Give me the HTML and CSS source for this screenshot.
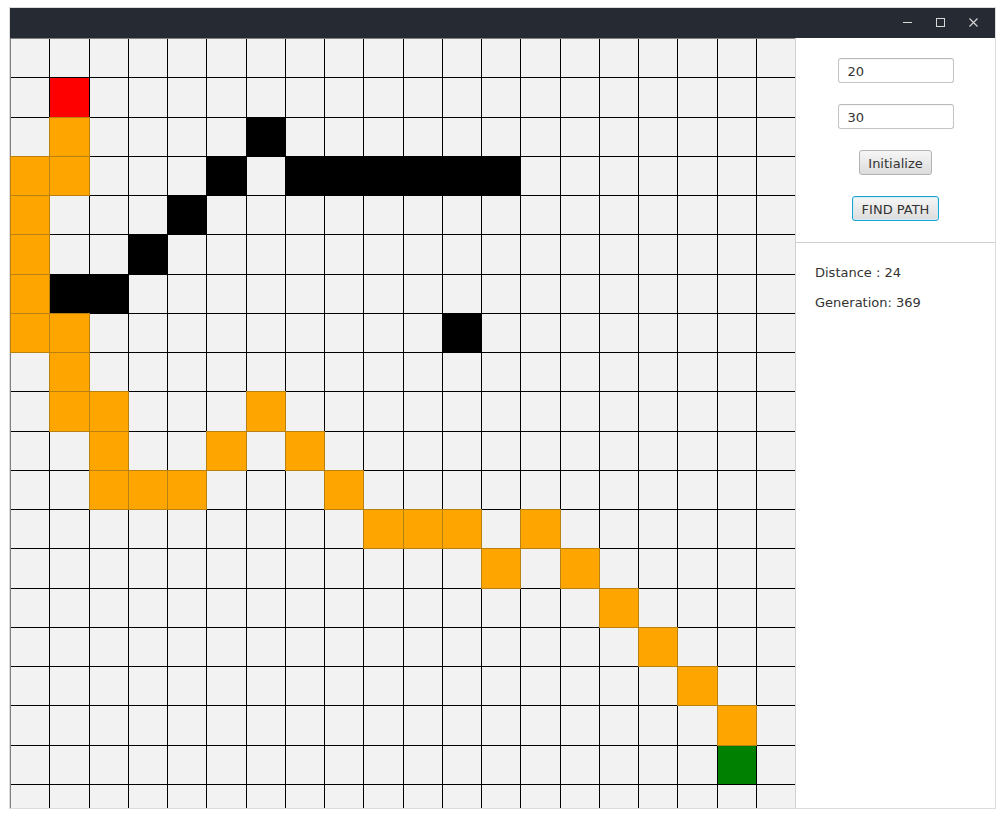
FILE: index.html
```html
<!DOCTYPE html>
<html>
<head>
<meta charset="utf-8">
<title>Path Finder</title>
<link rel="stylesheet" href="styles.css">
</head>
<body>
<div class="window">
  <div class="titlebar">
    <span class="wbtn"><svg width="9" height="9" viewBox="0 0 9 9"><path d="M0 4.5H9" stroke="#d8d8d8" stroke-width="1"/></svg></span>
    <span class="wbtn"><svg width="9" height="9" viewBox="0 0 9 9"><rect x="0.5" y="0.5" width="8" height="8" fill="none" stroke="#d8d8d8" stroke-width="1"/></svg></span>
    <span class="wbtn"><svg width="9" height="9" viewBox="0 0 9 9"><path d="M0.5 0.5L8.5 8.5M8.5 0.5L0.5 8.5" stroke="#d8d8d8" stroke-width="1.1"/></svg></span>
  </div>
  <div class="content">
    <div class="board">
      <div class="grid">
        <div></div><div></div><div></div><div></div><div></div><div></div><div></div><div></div><div></div><div></div><div></div><div></div><div></div><div></div><div></div><div></div><div></div><div></div><div></div><div></div>
        <div></div><div class="start"></div><div></div><div></div><div></div><div></div><div></div><div></div><div></div><div></div><div></div><div></div><div></div><div></div><div></div><div></div><div></div><div></div><div></div><div></div>
        <div></div><div class="path"></div><div></div><div></div><div></div><div></div><div class="wall"></div><div></div><div></div><div></div><div></div><div></div><div></div><div></div><div></div><div></div><div></div><div></div><div></div><div></div>
        <div class="path"></div><div class="path"></div><div></div><div></div><div></div><div class="wall"></div><div></div><div class="wall"></div><div class="wall"></div><div class="wall"></div><div class="wall"></div><div class="wall"></div><div class="wall"></div><div></div><div></div><div></div><div></div><div></div><div></div><div></div>
        <div class="path"></div><div></div><div></div><div></div><div class="wall"></div><div></div><div></div><div></div><div></div><div></div><div></div><div></div><div></div><div></div><div></div><div></div><div></div><div></div><div></div><div></div>
        <div class="path"></div><div></div><div></div><div class="wall"></div><div></div><div></div><div></div><div></div><div></div><div></div><div></div><div></div><div></div><div></div><div></div><div></div><div></div><div></div><div></div><div></div>
        <div class="path"></div><div class="wall"></div><div class="wall"></div><div></div><div></div><div></div><div></div><div></div><div></div><div></div><div></div><div></div><div></div><div></div><div></div><div></div><div></div><div></div><div></div><div></div>
        <div class="path"></div><div class="path"></div><div></div><div></div><div></div><div></div><div></div><div></div><div></div><div></div><div></div><div class="wall"></div><div></div><div></div><div></div><div></div><div></div><div></div><div></div><div></div>
        <div></div><div class="path"></div><div></div><div></div><div></div><div></div><div></div><div></div><div></div><div></div><div></div><div></div><div></div><div></div><div></div><div></div><div></div><div></div><div></div><div></div>
        <div></div><div class="path"></div><div class="path"></div><div></div><div></div><div></div><div class="path"></div><div></div><div></div><div></div><div></div><div></div><div></div><div></div><div></div><div></div><div></div><div></div><div></div><div></div>
        <div></div><div></div><div class="path"></div><div></div><div></div><div class="path"></div><div></div><div class="path"></div><div></div><div></div><div></div><div></div><div></div><div></div><div></div><div></div><div></div><div></div><div></div><div></div>
        <div></div><div></div><div class="path"></div><div class="path"></div><div class="path"></div><div></div><div></div><div></div><div class="path"></div><div></div><div></div><div></div><div></div><div></div><div></div><div></div><div></div><div></div><div></div><div></div>
        <div></div><div></div><div></div><div></div><div></div><div></div><div></div><div></div><div></div><div class="path"></div><div class="path"></div><div class="path"></div><div></div><div class="path"></div><div></div><div></div><div></div><div></div><div></div><div></div>
        <div></div><div></div><div></div><div></div><div></div><div></div><div></div><div></div><div></div><div></div><div></div><div></div><div class="path"></div><div></div><div class="path"></div><div></div><div></div><div></div><div></div><div></div>
        <div></div><div></div><div></div><div></div><div></div><div></div><div></div><div></div><div></div><div></div><div></div><div></div><div></div><div></div><div></div><div class="path"></div><div></div><div></div><div></div><div></div>
        <div></div><div></div><div></div><div></div><div></div><div></div><div></div><div></div><div></div><div></div><div></div><div></div><div></div><div></div><div></div><div></div><div class="path"></div><div></div><div></div><div></div>
        <div></div><div></div><div></div><div></div><div></div><div></div><div></div><div></div><div></div><div></div><div></div><div></div><div></div><div></div><div></div><div></div><div></div><div class="path"></div><div></div><div></div>
        <div></div><div></div><div></div><div></div><div></div><div></div><div></div><div></div><div></div><div></div><div></div><div></div><div></div><div></div><div></div><div></div><div></div><div></div><div class="path"></div><div></div>
        <div></div><div></div><div></div><div></div><div></div><div></div><div></div><div></div><div></div><div></div><div></div><div></div><div></div><div></div><div></div><div></div><div></div><div></div><div class="goal"></div><div></div>
        <div></div><div></div><div></div><div></div><div></div><div></div><div></div><div></div><div></div><div></div><div></div><div></div><div></div><div></div><div></div><div></div><div></div><div></div><div></div><div></div>
      </div>
    </div>
    <div class="panel">
      <div class="controls">
        <input class="field" type="text" value="20">
        <input class="field" type="text" value="30">
        <button class="btn">Initialize</button>
        <button class="btn focused">FIND PATH</button>
      </div>
      <div class="stats">
        <div class="stat">Distance : 24</div>
        <div class="stat">Generation: 369</div>
      </div>
    </div>
  </div>
</div>
</body>
</html>
```
FILE: styles.css
```css
* {
  box-sizing: border-box;
}

body {
  margin: 0;
  background: #ffffff;
  font-family: "DejaVu Sans", sans-serif;
  font-size: 13px;
  color: #333333;
}

.window {
  margin: 7px 0 0 9px;
  width: 987px;
  border: 1px solid #dcdcdc;
}

.titlebar {
  height: 30px;
  background: #262a33;
  display: flex;
  justify-content: flex-end;
  padding-right: 5px;
}

.wbtn {
  width: 33px;
  height: 30px;
  display: flex;
  justify-content: center;
  align-items: flex-start;
  padding-top: 10px;
}

.wbtn svg {
  display: block;
}

.content {
  display: flex;
  height: 770px;
}

.board {
  width: 786px;
  flex: none;
  overflow: hidden;
  border-right: 1px solid #d0d0d0;
}

.grid {
  width: 785px;
  display: grid;
  grid-template-columns: repeat(20, 38.25px);
  grid-auto-rows: 38.25px;
  gap: 1px;
  background: #000000;
  border-top: 1px solid #808080;
  border-left: 1px solid #808080;
}

.grid > div {
  background: #f2f2f2;
}

.grid > .path {
  background: #ffa500;
  box-shadow: 0 0 0 1px #b9810f;
}

.grid > .wall {
  background: #000000;
}

.grid > .start {
  background: #ff0000;
}

.grid > .goal {
  background: #008000;
}

.panel {
  flex: 1;
  background: #ffffff;
}

.controls {
  display: flex;
  flex-direction: column;
  align-items: center;
  gap: 21px;
  padding: 20px 0 21px;
  border-bottom: 1px solid #cfcfcf;
}

.field {
  width: 116px;
  height: 25px;
  margin: 0;
  padding: 1px 9px 0;
  border: 1px solid #c4c4c4;
  border-top-color: #b8b8b8;
  border-radius: 3px;
  background: #ffffff;
  box-shadow: inset 0 1px 1px rgba(0, 0, 0, 0.04);
  font-family: "DejaVu Sans", sans-serif;
  font-size: 13px;
  color: #333333;
  outline: none;
}

.btn {
  height: 25px;
  margin: 0;
  padding: 1px 8px 0;
  border: 1px solid #b3b3b3;
  border-radius: 3px;
  background: linear-gradient(#f6f6f6, #dcdcdc);
  font-family: "DejaVu Sans", sans-serif;
  font-size: 13px;
  color: #333333;
}

.btn.focused {
  padding: 1px 9px 0;
  border-color: #1aa3d6;
  box-shadow: inset 0 0 0 1px #d6ecf5;
}

.stats {
  display: flex;
  flex-direction: column;
  gap: 15px;
  padding: 22px 0 0 19px;
  line-height: 15px;
}
```
